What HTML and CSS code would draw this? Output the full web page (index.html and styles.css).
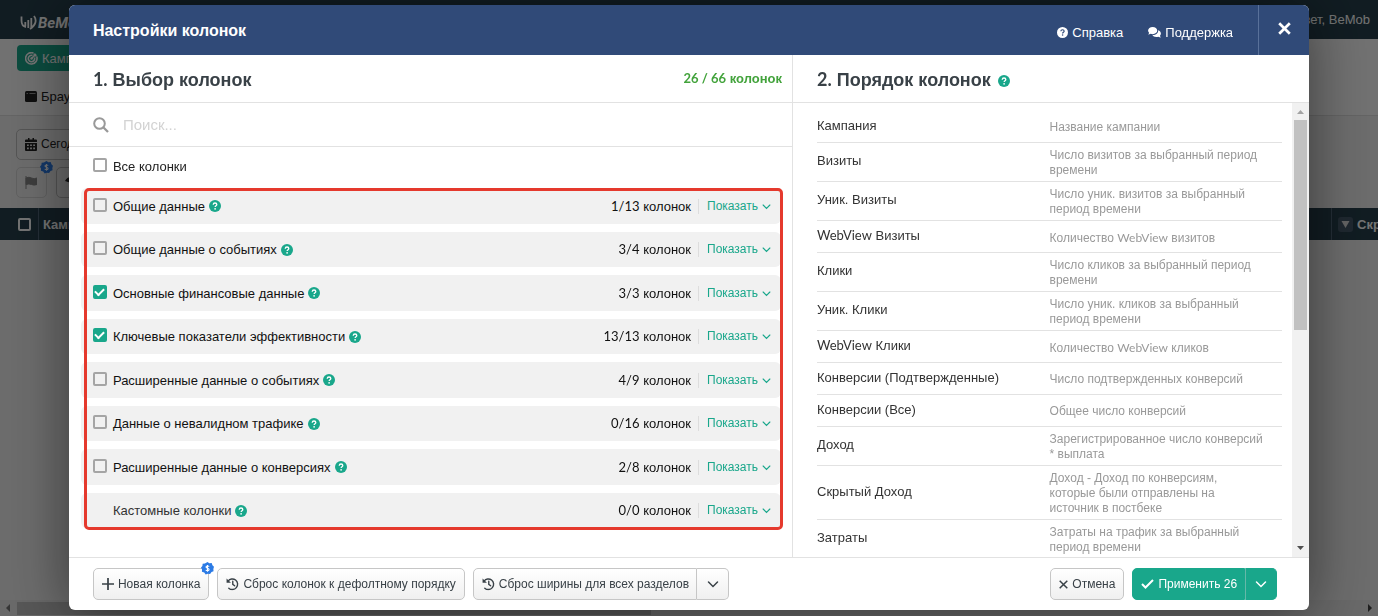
FILE: index.html
```html
<!DOCTYPE html>
<html lang="ru">
<head>
<meta charset="utf-8">
<title>Настройки колонок</title>
<link rel="stylesheet" href="styles.css">
</head>
<body>
<svg class="sprite" aria-hidden="true">
  <symbol id="help" viewBox="0 0 12 12"><circle cx="6" cy="6" r="6" fill="currentColor"/><path class="mark" d="M4.200 4.700C4.300 3.500 5 3 6 3s1.800.6 1.800 1.500C7.800 5.700 6.100 5.700 6.100 7" fill="none" stroke-width="1.300"/><circle class="dot" cx="6.100" cy="8.800" r=".85"/></symbol>
  <symbol id="down" viewBox="0 0 12 12"><path d="M1.500 4 6 8.500 10.500 4" fill="none" stroke="currentColor" stroke-width="1.500" stroke-linecap="round"/></symbol>
  <symbol id="history" viewBox="0 0 14 14"><path d="M2.200 3.900A5.700 5.700 0 1 1 3 11.500M7.300 4v3.400l2 1.500" fill="none" stroke="currentColor" stroke-width="1.500" stroke-linecap="round"/><path d="M.6 1v4.700h4.700z" fill="currentColor"/></symbol>
  <symbol id="dollar" viewBox="0 0 14 14"><path d="M7 0l2 1.400 2.500-.2.800 2.300L14 5.200 13.300 7.500l.2 2.400-2.200 1L9.800 13 7.300 12.600 5 13.400 3.500 11.400 1 10.600 1.100 8.100 0 6 1.500 4.200 1.800 1.800 4.200 1.500z" fill="#2c7be5"/><path d="M8.700 5C8.300 4 5.400 4 5.400 5.500 5.400 7 8.700 6.300 8.700 8 8.700 9.600 5.600 9.600 5.200 8.500M7 3.200v7.400" fill="none" stroke="#fff" stroke-width="1.200"/></symbol>
</svg>

<div class="app">
  <header class="topbar">
    <a class="logo" href="#"><svg width="17" height="16" viewBox="0 0 17 16"><path d="M1.500 1.500v4c0 3.500 1.500 6 4.500 6.500M5.300 7v4M8.300 5v8M11.300 3v9M14 1c3 4 2 9-4 13" fill="none" stroke="currentColor" stroke-width="1.800"/></svg>BeMob</a>
    <span>Привет, BeMob</span>
  </header>
  <nav class="nav">
    <a class="tab active" href="#"><svg width="13" height="13" viewBox="0 0 13 13"><g fill="none" stroke="currentColor" stroke-width="1.600"><path d="M11.700 4.500A5.700 5.700 0 1 1 8.500 1.100"/><path d="M9.500 5.500A3.200 3.200 0 1 1 7.500 3.500"/><path d="M6.500 6.500 11 2M9.300 1.500v2.300h2.300"/></g><circle cx="6.500" cy="6.500" r="1.200" fill="currentColor"/></svg>Кампании</a>
    <a class="tab" href="#"><svg width="12" height="11" viewBox="0 0 12 11"><rect width="12" height="11" rx="1.500" fill="currentColor"/><path d="M1.500 2.500h1.500M4.500 2.500h6" stroke="#999"/></svg>Браузеры</a>
  </nav>
  <section class="filters">
    <div class="line"><button class="tool"><svg width="12" height="13" viewBox="0 0 12 13"><path d="M1 1.500h2V0h1.500v1.500h3V0H9v1.500h2q1 0 1 1V4H0V2.500q0-1 1-1zM0 5h12v7q0 1-1 1H1q-1 0-1-1z" fill="currentColor"/><path d="M2 6.500h1.800v1.600H2zM5.100 6.500h1.800v1.600H5.100zM8.200 6.500H10v1.600H8.200zM2 9.600h1.800v1.600H2zM5.100 9.600h1.800v1.600H5.100zM8.200 9.600H10v1.600H8.200z" fill="#eee"/></svg>Сегодня</button></div>
    <div class="line"><button class="tool faded" aria-label="Флаг"><svg width="12" height="13" viewBox="0 0 12 13"><path d="M1 0v13M1 2q3-1.500 5.500 0T12 2v6.500q-3 1.200-5.500 0T1 8.500z" fill="currentColor" stroke="currentColor"/></svg><svg class="badge" width="13" height="13"><use href="#dollar"/></svg></button><button class="tool" aria-label="Фильтр"><svg width="12" height="12" viewBox="0 0 12 12"><path d="M0 4q2-4 6-4t6 4L6 12V6z" fill="currentColor"/></svg></button></div>
  </section>
  <div class="thead">
    <span class="cell"><input type="checkbox" aria-label="Выбрать все"></span><strong class="cell grow">Кампания</strong>
    <strong class="cell last"><svg width="15" height="15" viewBox="0 0 15 15"><rect width="15" height="15" rx="3" fill="#45596a"/><path d="M3.500 4h8l-4 7z" fill="#ddd"/></svg>Скрытый доход</strong>
  </div>
  <div class="fill"></div>
  <div class="hbar"><svg width="17" height="16" viewBox="0 0 17 16"><path d="M10 4v8L6 8z" fill="#777"/></svg><i class="hthumb"></i><svg width="17" height="16" viewBox="0 0 17 16"><path d="M7 4v8l4-4z" fill="#444"/></svg></div>
</div>
<div class="backdrop"></div>

<main class="modal" role="dialog" aria-labelledby="dialog-title">
  <header class="mhead">
    <h1 id="dialog-title">Настройки колонок</h1>
    <a href="#"><svg width="11" height="11"><use href="#help"/></svg>Справка</a>
    <a href="#"><svg width="13" height="11" viewBox="0 0 14 12"><path d="M5 0c2.800 0 5 1.600 5 3.900S7.800 7.800 5 7.800c-.8 0-1.500-.1-2.100-.4C2 8 1 8.300 0 8.300c.6-.5 1-1.200 1.100-1.900C.4 5.700 0 4.900 0 3.900 0 1.600 2.200 0 5 0z" fill="currentColor"/><path d="M11 3.600c1.800.6 3 1.900 3 3.600 0 .9-.4 1.700-1 2.300.1.900.5 1.500 1 2-1 0-2-.3-2.900-.9C8 11.300 5.600 10.500 4.700 8.800 8.500 9 11.200 6.700 11 3.600z" fill="currentColor"/></svg>Поддержка</a>
    <button class="close" aria-label="Закрыть"><svg width="13" height="13" viewBox="0 0 13 13"><path d="M1.200 1.200l10.600 10.600M11.800 1.200 1.200 11.800" stroke="currentColor" stroke-width="2.700"/></svg></button>
  </header>
  <div class="mbody">
    <section class="choose">
      <div class="title"><h2><span class="lat">1.</span> Выбор колонок</h2><b class="total"><span class="lat">26 / 66</span> колонок</b></div>
      <label class="search"><svg width="16" height="16" viewBox="0 0 16 16"><circle cx="6.500" cy="6.500" r="5.300" fill="none" stroke="currentColor" stroke-width="2"/><path d="M10.500 10.500 15 15" stroke="currentColor" stroke-width="2.300"/></svg><input type="text" placeholder="Поиск..." aria-label="Поиск"></label>
      <label class="all check"><input type="checkbox">Все колонки</label>
      <div class="groups">
        <div class="group"><label class="check"><input type="checkbox">Общие данные</label><svg class="help"><use href="#help"/></svg><span class="count"><span class="lat">1/13</span> колонок</span><button class="show">Показать<svg><use href="#down"/></svg></button></div>
        <div class="group"><label class="check"><input type="checkbox">Общие данные о событиях</label><svg class="help"><use href="#help"/></svg><span class="count"><span class="lat">3/4</span> колонок</span><button class="show">Показать<svg><use href="#down"/></svg></button></div>
        <div class="group"><label class="check"><input type="checkbox" checked>Основные финансовые данные</label><svg class="help"><use href="#help"/></svg><span class="count"><span class="lat">3/3</span> колонок</span><button class="show">Показать<svg><use href="#down"/></svg></button></div>
        <div class="group"><label class="check"><input type="checkbox" checked>Ключевые показатели эффективности</label><svg class="help"><use href="#help"/></svg><span class="count"><span class="lat">13/13</span> колонок</span><button class="show">Показать<svg><use href="#down"/></svg></button></div>
        <div class="group"><label class="check"><input type="checkbox">Расширенные данные о событиях</label><svg class="help"><use href="#help"/></svg><span class="count"><span class="lat">4/9</span> колонок</span><button class="show">Показать<svg><use href="#down"/></svg></button></div>
        <div class="group"><label class="check"><input type="checkbox">Данные о невалидном трафике</label><svg class="help"><use href="#help"/></svg><span class="count"><span class="lat">0/16</span> колонок</span><button class="show">Показать<svg><use href="#down"/></svg></button></div>
        <div class="group"><label class="check"><input type="checkbox">Расширенные данные о конверсиях</label><svg class="help"><use href="#help"/></svg><span class="count"><span class="lat">2/8</span> колонок</span><button class="show">Показать<svg><use href="#down"/></svg></button></div>
        <div class="group"><span class="plain">Кастомные колонки</span><svg class="help"><use href="#help"/></svg><span class="count"><span class="lat">0/0</span> колонок</span><button class="show">Показать<svg><use href="#down"/></svg></button></div>
        <div class="highlight"></div>
      </div>
    </section>
    <section class="order">
      <div class="title"><h2><span class="lat">2.</span> Порядок колонок</h2><svg class="help"><use href="#help"/></svg></div>
      <div class="scroller">
        <dl class="list">
          <div><dt>Кампания</dt><dd>Название кампании</dd></div>
          <div><dt>Визиты</dt><dd>Число визитов за выбранный период времени</dd></div>
          <div><dt>Уник. Визиты</dt><dd>Число уник. визитов за выбранный период времени</dd></div>
          <div><dt><span class="lat">WebView</span> Визиты</dt><dd>Количество <span class="lat">WebView</span> визитов</dd></div>
          <div><dt>Клики</dt><dd>Число кликов за выбранный период времени</dd></div>
          <div><dt>Уник. Клики</dt><dd>Число уник. кликов за выбранный период времени</dd></div>
          <div><dt><span class="lat">WebView</span> Клики</dt><dd>Количество <span class="lat">WebView</span> кликов</dd></div>
          <div><dt>Конверсии (Подтвержденные)</dt><dd>Число подтвержденных конверсий</dd></div>
          <div><dt>Конверсии (Все)</dt><dd>Общее число конверсий</dd></div>
          <div><dt>Доход</dt><dd>Зарегистрированное число конверсий * выплата</dd></div>
          <div><dt>Скрытый Доход</dt><dd>Доход - Доход по конверсиям, которые были отправлены на источник в постбеке</dd></div>
          <div><dt>Затраты</dt><dd>Затраты на трафик за выбранный период времени</dd></div>
        </dl>
        <div class="vbar"><svg width="17" height="17" viewBox="0 0 17 17"><path d="M5 11h7L8.500 7z" fill="#a3a3a3"/></svg><i class="vthumb"></i><svg width="17" height="17" viewBox="0 0 17 17"><path d="M5 6h7l-3.500 4z" fill="#505050"/></svg></div>
      </div>
    </section>
  </div>
  <footer class="mfoot">
    <button class="btn"><svg width="12" height="12" viewBox="0 0 11 11"><path d="M5.500 0v11M0 5.500h11" stroke="currentColor" stroke-width="1.600"/></svg>Новая колонка<svg class="badge" width="13" height="13"><use href="#dollar"/></svg></button>
    <button class="btn"><svg width="13" height="14" viewBox="0 0 14 14"><use href="#history"/></svg>Сброс колонок к дефолтному порядку</button>
    <div class="split"><button class="btn"><svg width="13" height="14" viewBox="0 0 14 14"><use href="#history"/></svg>Сброс ширины для всех разделов</button><button class="btn more" aria-label="Ещё"><svg width="12" height="12"><use href="#down"/></svg></button></div>
    <span class="grow"></span>
    <button class="btn"><svg width="9" height="9" viewBox="0 0 9 9"><path d="M.7.7l7.600 7.600M8.300.7.7 8.300" stroke="currentColor" stroke-width="1.500"/></svg>Отмена</button>
    <div class="split primary"><button class="btn"><svg width="13" height="10" viewBox="0 0 13 10"><path d="M1 5l3.500 3.500L12 1" fill="none" stroke="currentColor" stroke-width="2"/></svg>Применить 26</button><button class="btn more" aria-label="Варианты применения"><svg width="12" height="12"><use href="#down"/></svg></button></div>
  </footer>
</main>
</body>
</html>
```
FILE: styles.css
```css
* { box-sizing: border-box; }
body { margin: 0; height: 100vh; overflow: hidden; font: 13px/15px "Liberation Sans", Arial, sans-serif; color: #222; }
button, input { font: inherit; color: inherit; margin: 0; }
button { cursor: pointer; }
a { color: inherit; text-decoration: none; }
h1, h2, dl, dd { margin: 0; }
svg { flex: none; }
.sprite { position: absolute; width: 0; height: 0; }
.lat { font-family: Lato, sans-serif; }
.grow { flex: 1; }
.mark { stroke: var(--mark, #fff); }
.dot { fill: var(--mark, #fff); }

.app { height: 100%; display: flex; flex-direction: column; background: #f0f0f0; }
.topbar { height: 39px; padding: 0 8px 0 20px; display: flex; align-items: center; justify-content: space-between; background: #263f4c; color: #fff; font-size: 13px; }
.logo { display: flex; align-items: center; gap: 1px; padding-top: 6px; font: italic bold 15px/18px Roboto, "Liberation Sans", sans-serif; }
.nav { height: 77px; padding: 6px 17px; display: flex; flex-direction: column; align-items: flex-start; gap: 12px; background: #fbfbfb; border-bottom: 1px solid #ddd; font-size: 13px; }
.tab { height: 26px; padding: 0 8px; display: flex; align-items: center; gap: 4px; border-radius: 4px; }
.tab.active { background: #19a78b; color: #fff; }
.filters { padding: 13px 16px 10px; display: grid; gap: 7px; }
.line { display: flex; gap: 9px; }
.tool { position: relative; height: 31px; min-width: 31px; padding: 0 8px; display: flex; align-items: center; gap: 4px; background: none; border: 1px solid #bbb; border-radius: 5px; font-size: 12px; }
.faded { color: #888; border-color: #d5d5d5; }
.badge { position: absolute; top: -7px; right: -7px; }
.thead { height: 32px; display: flex; background: #263f4c; color: #fff; font-size: 13px; }
.cell { display: flex; align-items: center; gap: 4px; padding: 0 4px; }
.cell:first-child { width: 39px; padding-left: 18px; border-right: 1px solid #52677a; }
.cell input { appearance: none; width: 13px; height: 13px; border: 2px solid #fff; border-radius: 2px; }
.last { width: 47px; padding-left: 6px; border-left: 1px solid #52677a; overflow: hidden; white-space: nowrap; }
.fill { flex: 1; }
.hbar { height: 16px; display: flex; align-items: center; background: #e8e8e8; }
.hthumb { width: 46%; height: 13px; margin-right: auto; background: #c1c1c1; }
.backdrop { position: fixed; inset: 0; background: rgba(0, 0, 0, .55); }

.modal { position: fixed; inset: 5px 5% 6px; display: flex; flex-direction: column; background: #fff; border-radius: 6px; box-shadow: 0 5px 60px rgba(0, 0, 0, .5); }
.mhead { --mark: #304a78; height: 50px; padding-left: 24px; display: flex; align-items: center; gap: 25px; background: #304a78; color: #fff; border-radius: 6px 6px 0 0; }
.mhead h1 { flex: 1; padding-top: 2px; font-size: 16px; line-height: 20px; }
.mhead a { display: flex; align-items: center; gap: 4px; padding-top: 4px; }
.close { width: 51px; height: 50px; padding: 0; background: none; border: 0; border-left: 1px solid #59719a; }
.mbody { flex: 1; min-height: 0; display: grid; grid-template-columns: minmax(0, 724fr) minmax(0, 516fr); }
.choose { border-right: 1px solid #e2e2e2; }
.title { height: 48px; padding: 2px 10px 0 24px; display: flex; align-items: center; gap: 7px; border-bottom: 1px solid #e2e2e2; }
.title h2 { font-size: 18px; line-height: 22px; color: #394147; }
.title .help { margin-top: 2px; }
.total { margin-left: auto; padding-bottom: 3px; color: #43a33c; }
.help { width: 12px; height: 12px; color: #19a78b; }
.search { height: 44px; padding-left: 24px; display: flex; align-items: center; gap: 14px; border-bottom: 1px solid #e2e2e2; color: #999; }
.search input { flex: 1; border: 0; padding: 0; outline: 0; font-size: 15px; }
.search input::placeholder { color: #d3d3d3; }
.check { display: flex; align-items: center; gap: 6px; }
.check input { appearance: none; width: 14px; height: 14px; margin-bottom: 3px; display: grid; place-items: center; border: 2px solid #a5a5a5; border-radius: 2px; }
.check input:checked { border-color: #19a78b; background: #19a78b; }
.check input:checked::after { content: ""; width: 7px; height: 4px; margin-bottom: 2px; border: solid #fff; border-width: 0 0 2px 2px; transform: rotate(-45deg); }
.all { height: 41px; padding: 0 0 2px 24px; }
.groups { position: relative; height: 340px; margin: 0 11px 0 12px; display: grid; grid-auto-rows: 1fr; gap: 8px; color: #111; }
.group { padding: 1px 10px 0 12px; display: flex; align-items: center; background: #f1f1f1; border-radius: 6px; }
.group .help { margin-left: 4px; }
.plain { padding-left: 20px; color: #333; }
.count { margin-left: auto; padding: 0 7px 0 0; border-right: 1px solid #ddd; }
.show { padding: 0 0 0 8px; display: flex; align-items: center; gap: 4px; border: 0; background: none; color: #19a78b; font-size: 12px; }
.show svg { width: 9px; height: 9px; }
.highlight { position: absolute; inset: 0 -2px -2px 3px; border: 3px solid #e5392d; border-radius: 5px; pointer-events: none; }
.order { min-height: 0; display: flex; flex-direction: column; }
.order .title { flex: none; }
.scroller { flex: 1; min-height: 0; display: flex; }
.list { flex: 1; min-height: 0; overflow: hidden; padding: 8px 10px 0 24px; }
.list div { min-height: 32px; padding: 5px 0 3px; display: grid; grid-template-columns: 1fr 1fr; align-items: center; border-bottom: 1px solid #e2e2e2; color: #333; }
.list dt { padding-bottom: 5px; }
.list dd { padding-right: 18px; color: #999; font-size: 12px; }
.vbar { width: 17px; display: flex; flex-direction: column; align-items: center; background: #f1f1f1; }
.vthumb { width: 13px; height: 210px; margin-bottom: auto; background: #c1c1c1; }
.mfoot { height: 53px; padding: 0 32px 0 24px; display: flex; align-items: center; gap: 8px; border-top: 1px solid #e2e2e2; }
.btn { position: relative; height: 32px; padding: 0 8px; display: flex; align-items: center; gap: 4px; border: 1px solid #c6c6c6; border-radius: 5px; background: linear-gradient(#fff, #f0f0f0); color: #394147; font-size: 12px; white-space: nowrap; }
.mfoot .badge { right: -6px; }
.split { display: flex; }
.split .btn:first-child { padding-right: 7px; border-radius: 5px 0 0 5px; }
.split .more { width: 32px; border-left: 0; border-radius: 0 5px 5px 0; justify-content: center; }
.primary .btn { background: #19a78b; border-color: #19a78b; color: #fff; }
.primary .more { border-left: 1px solid #66b8a8; }
```
